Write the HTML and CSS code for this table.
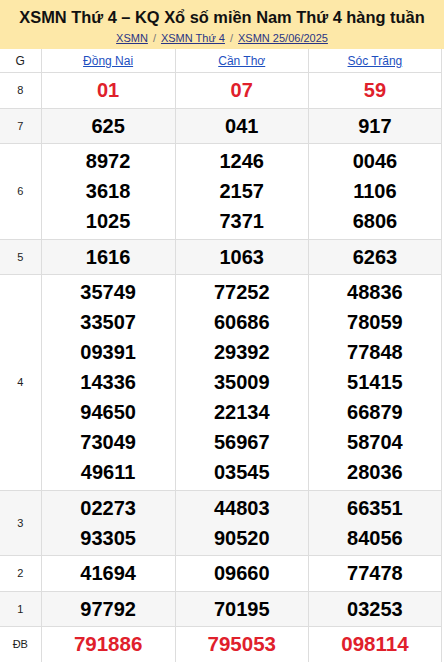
FILE: index.html
```html
<!DOCTYPE html>
<html lang="vi">
<head>
<meta charset="utf-8">
<link rel="stylesheet" href="styles.css">
</head>
<body>
<div class="page">
  <div class="head">
    <h1 class="title">XSMN Thứ 4 – KQ Xổ số miền Nam Thứ 4 hàng tuần</h1>
    <div class="crumbs"><a href="#">XSMN</a><span class="sep">/</span><a href="#">XSMN Thứ 4</a><span class="sep">/</span><a href="#">XSMN 25/06/2025</a></div>
  </div>
  <table class="kq">
    <colgroup><col class="c0"><col class="c1"><col class="c2"><col class="c3"></colgroup>
    <tr class="hdr"><td class="lbl">G</td><td><a href="#">Đồng Nai</a></td><td><a href="#">Cần Thơ</a></td><td><a href="#">Sóc Trăng</a></td></tr>
    <tr><td class="lbl">8</td><td class="num red">01</td><td class="num red">07</td><td class="num red">59</td></tr>
    <tr class="alt"><td class="lbl">7</td><td class="num">625</td><td class="num">041</td><td class="num">917</td></tr>
    <tr><td class="lbl">6</td><td class="num"><div>8972</div><div>3618</div><div>1025</div></td><td class="num"><div>1246</div><div>2157</div><div>7371</div></td><td class="num"><div>0046</div><div>1106</div><div>6806</div></td></tr>
    <tr class="alt"><td class="lbl">5</td><td class="num">1616</td><td class="num">1063</td><td class="num">6263</td></tr>
    <tr><td class="lbl">4</td>
      <td class="num"><div>35749</div><div>33507</div><div>09391</div><div>14336</div><div>94650</div><div>73049</div><div>49611</div></td>
      <td class="num"><div>77252</div><div>60686</div><div>29392</div><div>35009</div><div>22134</div><div>56967</div><div>03545</div></td>
      <td class="num"><div>48836</div><div>78059</div><div>77848</div><div>51415</div><div>66879</div><div>58704</div><div>28036</div></td></tr>
    <tr class="alt"><td class="lbl">3</td><td class="num"><div>02273</div><div>93305</div></td><td class="num"><div>44803</div><div>90520</div></td><td class="num"><div>66351</div><div>84056</div></td></tr>
    <tr><td class="lbl">2</td><td class="num">41694</td><td class="num">09660</td><td class="num">77478</td></tr>
    <tr class="alt"><td class="lbl">1</td><td class="num">97792</td><td class="num">70195</td><td class="num">03253</td></tr>
    <tr><td class="lbl">ĐB</td><td class="num red db">791886</td><td class="num red db">795053</td><td class="num red db">098114</td></tr>
  </table>
</div>
</body>
</html>
```
FILE: styles.css
```css
html, body { margin: 0; padding: 0; background: #fff; }
body { font-family: "Liberation Sans", Arial, sans-serif; color: #000; }
.page { width: 444px; }
.head { background: #fde8a8; padding: 7px 0 4px; text-align: center; height: 38px; }
.title { margin: 0; font-size: 16.4px; line-height: 20px; font-weight: bold; color: #111; white-space: nowrap; }
.crumbs { font-size: 11px; line-height: 14px; margin-top: 4px; }
.crumbs a { color: #2a3585; text-decoration: underline; }
.crumbs .sep { color: #777; margin: 0 5px; }
.kq { width: 442px; border-collapse: collapse; table-layout: fixed; }
.c0 { width: 41px; } .c1 { width: 134px; } .c2 { width: 133px; } .c3 { width: 133px; }
.kq td { border: 1px solid #ddd; text-align: center; padding: 2px 0 2.5px; vertical-align: middle; }
.kq tr:first-child td { border-top: none; }
.kq td:first-child { border-left: none; }
.hdr td { font-size: 12px; line-height: 16px; padding: 4px 0 3px; }
.hdr a { color: #1d4fbf; text-decoration: underline; }
.lbl { font-size: 11px; color: #222; }
.num { font-size: 20px; font-weight: bold; line-height: 30px; color: #000; }
.red { color: #e0202b; }
.db { font-size: 20.5px; }
.alt td { background: #f6f6f6; }
```
